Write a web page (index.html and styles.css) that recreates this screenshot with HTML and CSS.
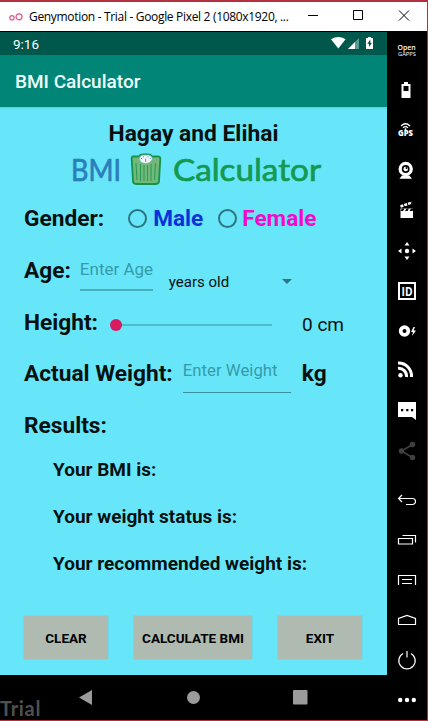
FILE: index.html
```
<!DOCTYPE html>
<html lang="en">
<head>
<meta charset="utf-8">
<title>Genymotion</title>
<link rel="stylesheet" href="styles.css">
</head>
<body>
<div class="window">
  <header class="titlebar">
    <svg class="geny" width="14" height="10" viewBox="0 0 14 10"><circle cx="3" cy="5.800" r="2.200"/><circle cx="10" cy="4.800" r="3"/></svg>
    <span class="caption">Genymotion - Trial - Google Pixel 2 (1080x1920, ...</span>
    <svg class="controls" width="124" height="29" viewBox="303 2 124 29"><path d="M308 15.500h10M353.500 10.500h9v9h-9zM399 10.500l10 10M409 10.500l-10 10"/></svg>
  </header>
  <div class="body">
    <div class="device">
      <div class="status">
        <span class="clock">9:16</span>
        <svg width="44" height="14" viewBox="330 37 44 14"><path fill="#fff" d="M331 39.300q7.300-4.600 14.600 0L338.300 48.500z"/><path fill="#5d9a91" d="M359 38v11h-11z"/><path fill="#fff" d="M355 42v7h-7z"/><path fill="#fff" d="M368 37h3v1h2v11h-7V38h2z"/><path fill="#00574b" d="M370.300 39.500l-3 4.300h1.700v3.200l3-4.300h-1.700z"/></svg>
      </div>
      <div class="appbar">BMI Calculator</div>
      <main class="content">
        <h1 class="names">Hagay and Elihai</h1>
        <svg class="logo" width="258" height="40" viewBox="68 149 258 40">
          <text class="logo-bmi" x="71" y="180.500" textLength="50" lengthAdjust="spacingAndGlyphs">BMI</text>
          <path d="M133 156.500h6q1-2 4-2h5q3 0 4 2h6q2.500 0 2.300 2.500L159 181q-.2 3-3 3h-20q-2.800 0-3-3l-1.300-22q-.2-2.500 1.300-2.500z" fill="#72b878" stroke="#15934c" stroke-width="1.800"/>
          <path d="M136 163l1 17M140.500 164v17M144 165v16M147.500 165v16M151 164v17M155.500 163l-1 17" stroke="#289858" stroke-width="1" fill="none"/>
          <path d="M139 159q1-4 4-4h5.500q3 0 4 4-2 4.500-6.800 4.500T139 159z" fill="#eef8fc" stroke="#6aa9b5" stroke-width=".7"/>
          <path d="M145.700 162v-3.500" stroke="#e66a30"/><path d="M141 158.500h1M143 156.800h1M147.500 156.800h1M149.800 158.500h1" stroke="#458bc0"/>
          <text class="logo-calc" x="173" y="180.500" textLength="148" lengthAdjust="spacingAndGlyphs">Calculator</text>
        </svg>
        <div class="row gender"><b class="label">Gender:</b><i class="radio"></i><b class="male">Male</b><i class="radio second"></i><b class="female">Female</b></div>
        <div class="row age"><b class="label">Age:</b><span class="input age-input">Enter Age</span><span class="unit">years old</span><i class="caret"></i></div>
        <div class="row height"><b class="label">Height:</b><span class="slider"><i class="thumb"></i></span><span class="value">0 cm</span></div>
        <div class="row weight"><b class="label">Actual Weight:</b><span class="input weight-input">Enter Weight</span><b class="kg">kg</b></div>
        <div class="row results"><b class="label">Results:</b></div>
        <div class="result">Your BMI is:</div>
        <div class="result">Your weight status is:</div>
        <div class="result">Your recommended weight is:</div>
        <div class="buttons"><button class="clear">CLEAR</button><button class="calculate">CALCULATE BMI</button><button class="exit">EXIT</button></div>
      </main>
      <nav class="navbar">
        <span class="trial">Trial</span>
        <svg width="232" height="45" viewBox="77 675 232 45" fill="#9b9b9b"><path d="M79 697.500l13-7.500v15z"/><circle cx="193.500" cy="697.500" r="6.500"/><rect x="293" y="690" width="14.500" height="14.500" rx="1"/></svg>
      </nav>
    </div>
    <aside class="tools">
      <svg viewBox="-20 -19 40 40"><text class="open" x="-9.500" y="-.5" textLength="18" lengthAdjust="spacingAndGlyphs">Open</text><text class="gapps" x="-9" y="6.300" textLength="18" lengthAdjust="spacingAndGlyphs">GAPPS</text></svg>
      <svg viewBox="-20 -19 40 40"><path class="solid" fill-rule="evenodd" d="M-3-8h4v2h2.500V8H-5.500V-6H-3zM-3.500-4v5h5v-5z"/></svg>
      <svg viewBox="-20 -19 40 40"><path class="line" d="M-6-4q4.500-4.500 9 0M-4-2.200q2.500-2.500 5 0"/><circle class="solid" cx="-1.500" cy="-.8" r="1"/><text class="gps" x="-9" y="6.300" textLength="15" lengthAdjust="spacingAndGlyphs">GPS</text></svg>
      <svg viewBox="-20 -19 40 40"><circle class="solid" cx="-1.300" cy="-1" r="7.200"/><circle cx="-1.300" cy="-1" r="3.900"/><circle class="solid" cx="-1.300" cy="-1" r="2.300"/><circle cx="-.5" cy="-2" r="1"/><path class="solid" d="M-5 5.500h7.400l2.600 3.200H-7.600z"/></svg>
      <svg viewBox="-20 -19 40 40"><path class="solid" d="M-6.500-1.500H6V8H-6.500z"/><path class="clap" d="M-6.500-3.500L5-7.500"/><path d="M-5-1.500h2.500L-4 1h-2.500zM-.5-1.500H2L.5 1H-2zM4-1.500h2V.5L5.500 1h-3z"/></svg>
      <svg viewBox="-20 -19 40 40"><circle class="solid" r="2.200" cy="1"/><path class="solid" d="M0-8l2.500 3.500h-5zM0 10L2.500 6.500h-5zM-9 1l3.500-2.500v5zM9 1L5.500-1.500v5z"/></svg>
      <svg viewBox="-20 -19 40 40"><rect class="box" x="-8" y="-7" width="16" height="16"/><text class="id" x="-5.500" y="5.500" textLength="11" lengthAdjust="spacingAndGlyphs">ID</text></svg>
      <svg viewBox="-20 -19 40 40"><path class="solid" fill-rule="evenodd" d="M-8.200 1a5.700 5.700 0 1 0 11.400 0 5.700 5.700 0 1 0-11.400 0zM-4.500 1a2 2 0 1 1 4 0 2 2 0 1 1-4 0z"/><path class="solid" d="M6.500-3L4 2h2L5 6l4-5.500H6.500L8-3z"/></svg>
      <svg viewBox="-20 -19 40 40"><circle class="solid" cx="-6.500" cy="5.200" r="2.200"/><path class="wave" d="M-9-1.800a8 8 0 0 1 8.500 8.800M-9-7a13 13 0 0 1 13.500 14"/></svg>
      <svg viewBox="-20 -19 40 40"><path class="solid" d="M-9-8H9V10L5 7H-9z"/><path d="M-6-1h2.200v2.200H-6zM-.8-1h2.200v2.200H-.8zM4-1h2.200v2.200H4z"/></svg>
      <svg viewBox="-20 -19 40 40"><path d="M5.500-5.500l-11 6.500 11 6.500" fill="none" stroke="#404040" stroke-width="1.600"/><g fill="#404040"><circle cx="5.500" cy="-5.500" r="2.700"/><circle cx="-5.500" cy="1" r="2.700"/><circle cx="5.500" cy="7.500" r="2.700"/></g></svg>
      <svg class="lower" viewBox="-20 -19 40 40"><path class="line" d="M-5-5l-3.500 3.500L-5 2M-8.500-1.500H5.500a3 3 0 0 1 0 6H-1"/></svg>
      <svg viewBox="-20 -19 40 40"><path class="line" d="M-8.500-1.500h14v5.500h-14zM-4.500-4.500h13v7"/></svg>
      <svg viewBox="-20 -19 40 40"><path class="line" d="M-8.500 5v-9.500h17V5M-5-.5H5M-5 3.500H5"/></svg>
      <svg viewBox="-20 -19 40 40"><path class="line" d="M-8.500 4.500v-6L0-4.500l8.500 3v6z"/></svg>
      <svg viewBox="-20 -19 40 40"><path class="line" d="M-4-6.500a8.200 8.200 0 1 0 8 0M0-9v6.500"/></svg>
      <svg viewBox="-20 -19 40 40"><g class="solid"><circle cx="-6.800" r="2.200"/><circle r="2.200"/><circle cx="6.800" r="2.200"/></g></svg>
    </aside>
  </div>
</div>
</body>
</html>
```
FILE: styles.css
```
* { box-sizing: border-box; }
body { margin: 0; background: #000; font-family: Roboto, "Liberation Sans", sans-serif; color: #07110f; }
.window { width: 428px; height: 721px; overflow: hidden; border: solid #b5303f; border-width: 2px 1px 1px 0; background: #000; white-space: nowrap; }
.titlebar { height: 29px; background: #fff; display: flex; align-items: center; }
.geny { margin-left: 9px; flex: none; fill: none; stroke: #d9578c; stroke-width: 1.200; }
.caption { margin-left: 6px; width: 274px; font: 12px "Open Sans", "Noto Sans", sans-serif; letter-spacing: -.32px; color: #000; }
.controls { flex: none; fill: none; stroke: #000; }
.body { display: flex; height: 689px; }
.device { width: 387px; flex: none; }
.status { margin-top: 1px; height: 23px; background: #00574b; display: flex; align-items: center; justify-content: space-between; padding: 0 13px; color: #fff; }
.clock { font-size: 13.500px; font-weight: 400; }
.appbar { height: 52px; background: #008577; padding-left: 15px; line-height: 54px; font-size: 19px; font-weight: 500; color: #effffd; }
.content { height: 568px; background: linear-gradient(#58d0dc, #67e6fa 3px); display: flex; flex-direction: column; }
.names { margin: 13px 0 0; height: 28px; line-height: 28px; font-size: 22.800px; font-weight: 700; text-align: center; }
.logo { margin: 1px 0 0 68px; flex: none; overflow: visible; }
.logo text { font-family: Lato, sans-serif; font-size: 31.500px; stroke-width: .7; stroke-linejoin: round; }
.logo .logo-bmi { fill: #2a7fb9; stroke: #2a7fb9; }
.logo .logo-calc { fill: #149951; stroke: #149951; }
.row { display: flex; align-items: center; height: 52px; padding-left: 24px; flex: none; }
.label, .kg { font-size: 22.700px; }
.gender { margin-top: 3px; }
.radio { width: 19px; height: 19px; border: 2px solid #2d7681; border-radius: 50%; margin-left: 24px; }
.radio.second { margin-left: 15px; }
.male, .female { font-size: 22.600px; margin-left: 6px; }
.female { margin-left: 5px; }
.male { color: #0a32d8; }
.female { color: #f00ccd; }
.input { font-size: 17px; color: #369ba9; height: 32px; line-height: 20px; border-bottom: 1px solid #3b919d; align-self: flex-start; }
.age-input { width: 73px; margin: 15px 0 0 9px; border-bottom-width: 2px; border-color: #4aafbd; }
.unit { font-size: 15px; margin: 23px 0 0 16px; width: 113px; }
.caret { border: 5px solid transparent; border-top-color: #2d7681; border-bottom: 0; margin-top: 22px; }
.slider { width: 162px; height: 12px; margin: 6px 0 0 12px; background: linear-gradient(#4dbdcb, #4dbdcb) 0 5px / 100% 2px no-repeat; }
.thumb { display: block; width: 12px; height: 12px; border-radius: 50%; background: #d81b60; }
.value { font-size: 19px; margin: 4px 0 0 30px; }
.weight { height: 51px; }
.weight-input { width: 108px; height: 33px; margin: 12px 0 0 10px; font-size: 16.800px; }
.kg { margin-left: 11px; }
.result { height: 47px; line-height: 47px; margin-left: 53px; font-size: 19px; font-weight: 700; flex: none; }
.results { height: 52px; margin-bottom: -5px; }
.buttons { display: flex; margin: 29px 0 0 24px; }
button { height: 43px; padding: 0; border: 0; background: #afbbb0; font: 700 13.500px Roboto, sans-serif; color: #000; box-shadow: 0 0 1px #80a5a0; }
.clear { width: 84px; }
.calculate { width: 118px; margin-left: 26px; }
.exit { width: 84px; margin-left: 26px; }
.navbar { height: 45px; display: flex; background: #000; }
.trial { width: 77px; flex: none; color: #505050; font: 700 20px/66px Lato, sans-serif; letter-spacing: .7px; }
.tools { width: 40px; flex: none; background: #000; }
.tools svg { display: block; width: 40px; height: 40px; }
.tools .lower { margin-top: 10px; }
.solid, .tools text { fill: #fff; }
.line, .box, .wave, .clap { fill: none; stroke: #fff; stroke-width: 1.200; }
.box { stroke-width: 2; }
.wave { stroke-width: 3; }
.clap { stroke-width: 2.500; stroke-dasharray: 3 1; }
.tools text { font-family: "Open Sans", sans-serif; font-weight: 600; }
.tools .open { font-size: 7px; }
.tools .gapps { font-size: 5.500px; font-weight: 400; }
.tools .gps { font-size: 8px; font-weight: 800; }
.tools .id { font-size: 13px; font-weight: 700; }
```
